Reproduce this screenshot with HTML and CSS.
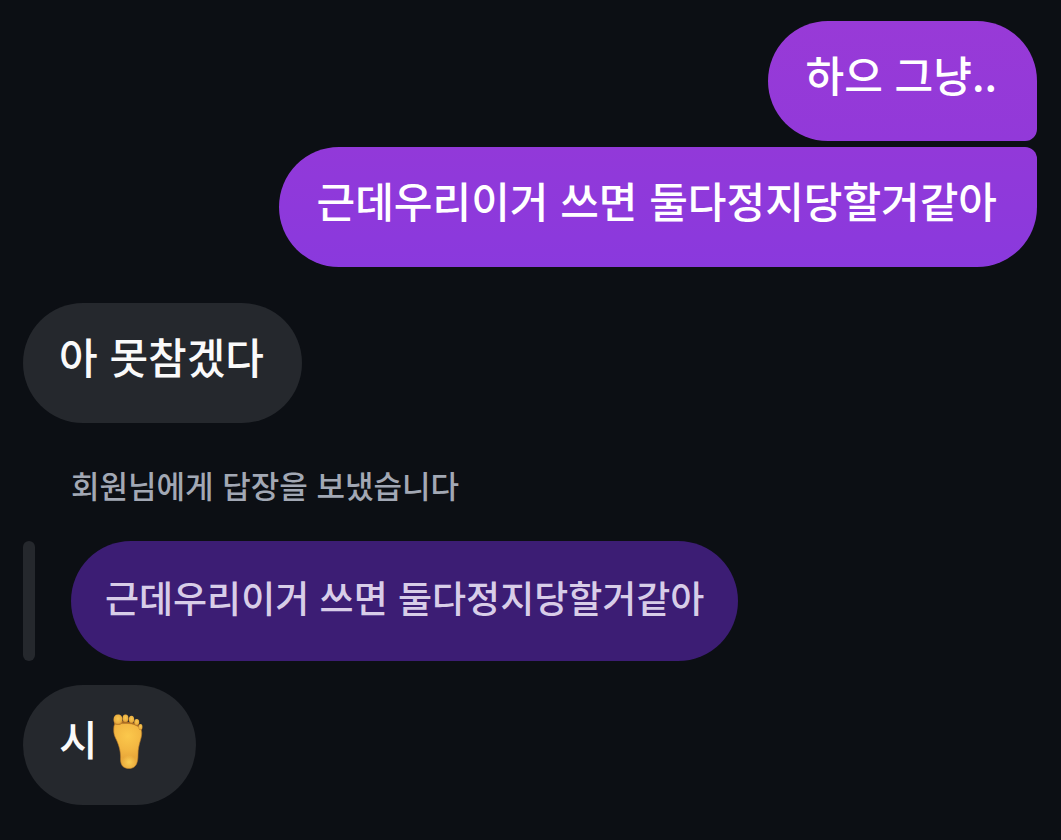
FILE: index.html
```html
<!DOCTYPE html>
<html lang="ko">
<head>
<meta charset="utf-8">
<meta name="viewport" content="width=device-width, initial-scale=1">
<title>대화</title>
<link rel="stylesheet" href="styles.css">
</head>
<body>
<main class="chat">
  <section class="group group-sent">
    <p class="bubble sent sent-first">하으 그냥..</p>
    <p class="bubble sent sent-last">근데우리이거 쓰면 둘다정지당할거같아</p>
  </section>
  <section class="group">
    <p class="bubble received">아 못참겠다</p>
  </section>
  <section class="group">
    <p class="reply-label">회원님에게 답장을 보냈습니다</p>
    <blockquote class="quote">
      <p class="bubble quoted">근데우리이거 쓰면 둘다정지당할거같아</p>
    </blockquote>
    <p class="bubble received">시<svg class="foot" viewBox="0 0 60 64" role="img" aria-label="발">
      <defs>
        <radialGradient id="sole" gradientUnits="userSpaceOnUse" cx="30" cy="30" r="34">
          <stop offset="0" stop-color="#fbc84c"/>
          <stop offset="0.4" stop-color="#f3b742"/>
          <stop offset="0.65" stop-color="#e9a83a"/>
          <stop offset="1" stop-color="#efb442"/>
        </radialGradient>
        <radialGradient id="toe" cx="0.5" cy="0.4" r="0.6">
          <stop offset="0" stop-color="#f9c851"/>
          <stop offset="0.7" stop-color="#e9ad3f"/>
          <stop offset="1" stop-color="#b87927"/>
        </radialGradient>
        <radialGradient id="heel" cx="0.5" cy="0.5" r="0.5">
          <stop offset="0" stop-color="#fccf55"/>
          <stop offset="1" stop-color="#fccf55" stop-opacity="0"/>
        </radialGradient>
      </defs>
      <path fill="#a96a22" d="M16 17L24 15L38 17L44 22L42 28L18 28Z"/>
      <path fill="url(#sole)" stroke="#b97a28" stroke-width="0.6" d="M16 20C17 16 22 18 26 17.5C32 17 36 18 40 20.5C45 23 44 29 42.500 34C41 39 40 43 40 49C40 57 38 62.500 31 62.500C25 62.500 22.500 59 22.500 53C23 44 20 37 17.500 32C15.500 28 15.500 24 16 20Z"/>
      <ellipse cx="31" cy="56" rx="7" ry="7" fill="url(#heel)"/>
      <g fill="url(#toe)">
        <path d="M20 8.500C23.500 8.500 24.500 11 24.500 14C24.500 17 23 19 20.500 19C17 19 15.500 17 15.500 13.500C15.500 10.500 17 8.500 20 8.500Z"/>
        <ellipse cx="27.500" cy="12.500" rx="3" ry="4"/>
        <ellipse cx="33.500" cy="13.500" rx="2.700" ry="3.800"/>
        <ellipse cx="38.700" cy="16.200" rx="2.500" ry="3.300"/>
        <ellipse cx="42.500" cy="21" rx="2" ry="3"/>
      </g>
    </svg></p>
  </section>
</main>
</body>
</html>
```
FILE: styles.css
```css
* {
  box-sizing: border-box;
}

body {
  margin: 0;
  background: #0c0f14;
  color: #fafafa;
  font-family: "Noto Sans CJK KR", sans-serif;
}

p,
blockquote {
  margin: 0;
}

.chat {
  display: flex;
  flex-direction: column;
  gap: 36px;
  padding: 21px 24px 35px 23px;
}

.group {
  display: flex;
  flex-direction: column;
  align-items: flex-start;
}

.group-sent {
  align-items: flex-end;
  gap: 6px;
}

.bubble {
  display: flex;
  min-height: 120px;
  padding: 21px 38px 35px 36px;
  border-radius: 60px;
  font-size: 42px;
  font-weight: 500;
  line-height: 64px;
}

.sent {
  padding-right: 40px;
  padding-left: 38px;
  color: #ffffff;
}

.sent-first {
  background: linear-gradient(#983ad7, #9239d9);
  border-bottom-right-radius: 12px;
}

.sent-last {
  background: linear-gradient(#9239d9, #8a39dd);
  border-top-right-radius: 12px;
}

.received {
  background: #25282d;
}

.reply-label {
  padding: 4px 48px 34px;
  color: #a2a8b4;
  font-size: 31px;
  font-weight: 500;
  line-height: 44px;
}

.quote {
  display: flex;
  gap: 36px;
  margin-bottom: 24px;
}

.quote::before {
  content: "";
  width: 12px;
  border-radius: 6px;
  background: #25282d;
}

.quoted {
  padding: 24px 34px 32px;
  background: #3c1d74;
  color: #d8cde8;
  font-size: 37px;
}

.foot {
  width: 60px;
  height: 64px;
}
```
